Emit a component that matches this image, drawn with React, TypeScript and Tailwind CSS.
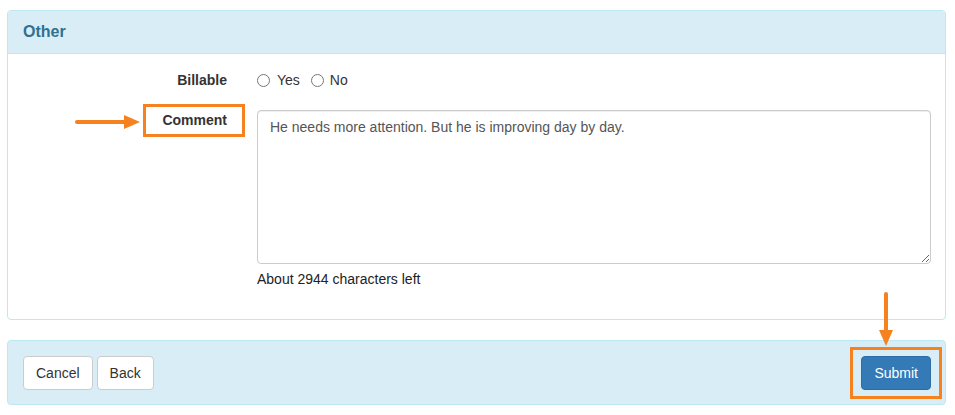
import React from "react";

const ORANGE = "#f5821f";

function Btn({ children, primary }: { children: React.ReactNode; primary?: boolean }) {
  return (
    <button
      type="button"
      className={`h-[34px] rounded-[4px] border px-3 text-[14px] leading-5 ${
        primary ? "border-[#2e6da4] bg-[#337ab7] text-white" : "border-[#ccc] bg-white text-[#333]"
      }`}
    >
      {children}
    </button>
  );
}

export default function App() {
  return (
    <div className="relative h-[415px] w-[955px] bg-white pt-[10px] font-['Liberation_Sans',Arial,sans-serif] text-[14px] leading-5 text-[#333]">
      {/* main panel */}
      <div className="ml-[7px] w-[939px] rounded-[4px] border border-[#bce8f1]">
        <div className="flex h-[43px] items-center rounded-t-[3px] border-b border-[#bce8f1] bg-[#d9edf7] px-[15px]">
          <h3 className="text-[16px] font-bold text-[#31708f]">Other</h3>
        </div>
        <div className="pt-[16px] pb-[30px]">
          <div className="flex">
            <div className="w-[234px] pr-[15px] text-right font-bold">Billable</div>
            <div className="flex items-center pl-[15px]">
              <label className="flex items-center">
                <input type="radio" name="billable" className="m-0 h-[13px] w-[13px]" />
                <span className="ml-[7px]">Yes</span>
              </label>
              <label className="ml-[11px] flex items-center">
                <input type="radio" name="billable" className="m-0 h-[13px] w-[13px]" />
                <span className="ml-[6px]">No</span>
              </label>
            </div>
          </div>
          <div className="mt-[20px] flex">
            <div className="w-[234px] pr-[15px] text-right font-bold">Comment</div>
            <div className="flex-1 pl-[15px] pr-[14px]">
              <textarea
                className="block h-[154px] w-full resize-y rounded-[4px] border border-[#ccc] px-3 py-[6px] text-[14px] leading-5 text-[#555] shadow-[inset_0_1px_1px_rgba(0,0,0,0.075)] outline-none"
                defaultValue="He needs more attention. But he is improving day by day."
              />
              <div className="mt-[5px] text-[#222]">About 2944 characters left</div>
            </div>
          </div>
        </div>
      </div>

      {/* footer panel */}
      <div className="mt-[20px] ml-[7px] flex w-[939px] items-center justify-between rounded-[4px] border border-[#bce8f1] bg-[#d9edf7] pt-[15px] pb-[14px] pl-[15px] pr-[14px]">
        <div className="flex gap-[4px]">
          <Btn>Cancel</Btn>
          <Btn>Back</Btn>
        </div>
        <Btn primary>Submit</Btn>
      </div>

      {/* annotations */}
      <div className="absolute left-[143px] top-[104px] h-[33px] w-[102px] border-[3px] border-[#f5821f]" />
      <svg className="absolute left-[74px] top-[113px]" width="68" height="18" viewBox="0 0 68 18">
        <line x1="3" y1="9" x2="52" y2="9" stroke={ORANGE} strokeWidth="4" strokeLinecap="round" />
        <polygon points="50,2 66,9 50,16" fill={ORANGE} />
      </svg>
      <div className="absolute left-[850px] top-[347px] h-[52px] w-[92px] border-[3px] border-[#f5821f]" />
      <svg className="absolute left-[877px] top-[291px]" width="18" height="56" viewBox="0 0 18 56">
        <line x1="9" y1="3" x2="9" y2="42" stroke={ORANGE} strokeWidth="4" strokeLinecap="round" />
        <polygon points="2,39 16,39 9,55" fill={ORANGE} />
      </svg>
    </div>
  );
}
